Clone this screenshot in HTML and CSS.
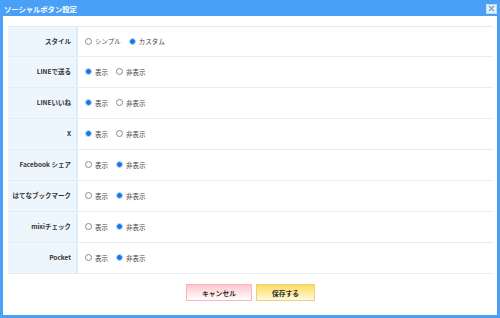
FILE: index.html
```html
<!DOCTYPE html>
<html lang="ja">
<head>
<meta charset="utf-8">
<link rel="stylesheet" href="styles.css">
</head>
<body>
<div class="dialog">
  <div class="titlebar">
    <span class="title">ソーシャルボタン設定</span>
    <span class="close"><svg width="7" height="7" viewBox="0 0 7 7"><path d="M1 1L6 6M6 1L1 6" stroke="#6f9fd6" stroke-width="1.2"/></svg></span>
  </div>
  <div class="content">
    <div class="table">
      <div class="row"><div class="label">スタイル</div><div class="value"><span class="opt"><span class="radio"></span>シンプル</span><span class="opt"><span class="radio on"></span>カスタム</span></div></div>
      <div class="row"><div class="label">LINEで送る</div><div class="value"><span class="opt"><span class="radio on"></span>表示</span><span class="opt"><span class="radio"></span>非表示</span></div></div>
      <div class="row"><div class="label">LINEいいね</div><div class="value"><span class="opt"><span class="radio on"></span>表示</span><span class="opt"><span class="radio"></span>非表示</span></div></div>
      <div class="row"><div class="label">X</div><div class="value"><span class="opt"><span class="radio on"></span>表示</span><span class="opt"><span class="radio"></span>非表示</span></div></div>
      <div class="row"><div class="label">Facebook シェア</div><div class="value"><span class="opt"><span class="radio"></span>表示</span><span class="opt"><span class="radio on"></span>非表示</span></div></div>
      <div class="row"><div class="label">はてなブックマーク</div><div class="value"><span class="opt"><span class="radio"></span>表示</span><span class="opt"><span class="radio on"></span>非表示</span></div></div>
      <div class="row"><div class="label">mixiチェック</div><div class="value"><span class="opt"><span class="radio"></span>表示</span><span class="opt"><span class="radio on"></span>非表示</span></div></div>
      <div class="row"><div class="label">Pocket</div><div class="value"><span class="opt"><span class="radio"></span>表示</span><span class="opt"><span class="radio on"></span>非表示</span></div></div>
    </div>
    <div class="footer">
      <button class="btn cancel">キャンセル</button>
      <button class="btn save">保存する</button>
    </div>
  </div>
</div>
</body>
</html>
```
FILE: styles.css
```css
html, body {
  margin: 0;
  padding: 0;
  background: #fff;
}
body {
  font-family: "Noto Sans CJK JP", "Noto Sans", sans-serif;
  color: #333;
}
.dialog {
  width: 500px;
  height: 318px;
  box-sizing: border-box;
  border: 3px solid #4a9ff6;
  border-top: none;
  display: flex;
  flex-direction: column;
  background: #fff;
}
.titlebar {
  height: 16px;
  background: #4a9ff6;
  display: flex;
  align-items: center;
  justify-content: space-between;
  margin: 0 -3px;
  padding: 0 3px 0 4px;
}
.title {
  color: #fff;
  font-size: 7.4px;
  font-weight: bold;
  letter-spacing: -0.1px;
}
.close {
  width: 11px;
  height: 10px;
  background: #e9f2fc;
  border: 1px solid #c6dcf4;
  box-sizing: border-box;
  display: flex;
  align-items: center;
  justify-content: center;
  margin-top: 1px;
}
.close svg { display: block; }
.content {
  flex: 1;
  padding: 10px 4px 0 5px;
  display: flex;
  flex-direction: column;
}
.table {
  border-top: 1px solid #e3eaf2;
}
.row {
  display: flex;
  height: 31px;
  border-bottom: 1px solid #e4ecf4;
  box-sizing: border-box;
}
.row:first-child { height: 30px; }
.label {
  width: 70px;
  box-sizing: border-box;
  background: #eef6fd;
  border-right: 2px solid #dfebf7;
  font-size: 6.5px;
  font-weight: bold;
  padding-right: 5px;
  padding-bottom: 2px;
  display: flex;
  align-items: center;
  justify-content: flex-end;
  white-space: nowrap;
  color: #333;
}
.value {
  flex: 1;
  display: flex;
  align-items: center;
  padding-left: 7px;
  padding-bottom: 1px;
  font-size: 6.5px;
  color: #444;
  gap: 8px;
}
.opt {
  display: inline-flex;
  align-items: center;
  gap: 3px;
}
.radio {
  width: 7px;
  height: 7px;
  box-sizing: border-box;
  border: 1px solid #8a8a8a;
  border-radius: 50%;
  background: #fff;
  display: inline-block;
}
.radio.on {
  border: 1px solid #9cc6f5;
  background: radial-gradient(circle, #1a73e8 0, #1a73e8 2.2px, #fff 2.6px);
}
.footer {
  display: flex;
  justify-content: center;
  gap: 4px;
  padding-top: 10px;
}
.btn {
  height: 17px;
  font-family: inherit;
  font-size: 6.8px;
  font-weight: bold;
  color: #333;
  padding: 0;
  cursor: pointer;
}
.cancel {
  width: 66px;
  background: linear-gradient(#ffc6cb, #fff4f5 80%, #fff);
  border: 1px solid #f6b6bc;
}
.save {
  width: 59px;
  background: linear-gradient(#ffdc60, #fff3c0 80%, #fffbe6);
  border: 1px solid #ead27a;
}
```
